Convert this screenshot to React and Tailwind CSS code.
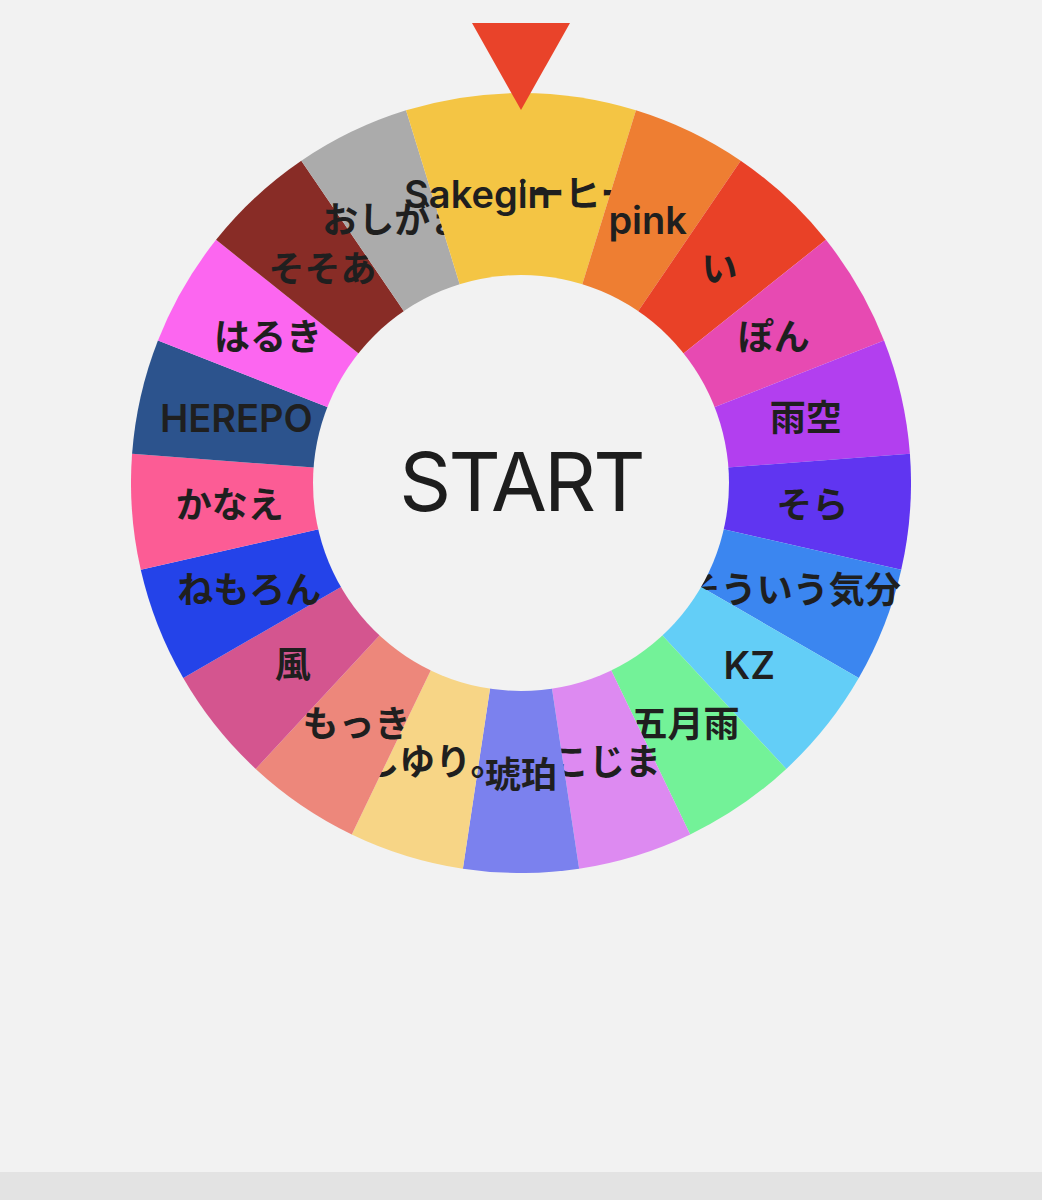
import React from 'react'

const items = [
  { name: 'コーヒー', color: '#F4C544' },
  { name: 'pink', color: '#EE7E32' },
  { name: 'い', color: '#E94127' },
  { name: 'ぽん', color: '#E74AB2' },
  { name: '雨空', color: '#B23FEF' },
  { name: 'そら', color: '#6035F1' },
  { name: 'そういう気分', color: '#3B86F0' },
  { name: 'KZ', color: '#63CEF7' },
  { name: '五月雨', color: '#73F298' },
  { name: 'こじま', color: '#DD8AF1' },
  { name: '琥珀', color: '#7B81EE' },
  { name: 'しゆり。', color: '#F7D586' },
  { name: 'もっき', color: '#ED877B' },
  { name: '風', color: '#D4558F' },
  { name: 'ねもろん', color: '#2443E9' },
  { name: 'かなえ', color: '#FC5C95' },
  { name: 'HEREPO', color: '#2C538D' },
  { name: 'はるき', color: '#FC66F0' },
  { name: 'そそあ', color: '#882C26' },
  { name: 'おしがま', color: '#ABABAB' },
  { name: 'Sakegin', color: '#F4C544' },
]

const SIZE = 780
const C = SIZE / 2
const R = 390
const LABEL_R = 292

// angle in degrees, clockwise from 12 o'clock
function point(deg, r) {
  const a = (deg * Math.PI) / 180
  return [C + r * Math.sin(a), C - r * Math.cos(a)]
}

const isLatin = (s) => /^[\x00-\x7f]+$/.test(s)

function Wheel() {
  const step = 360 / items.length

  return (
    <svg width={SIZE} height={SIZE} viewBox={`0 0 ${SIZE} ${SIZE}`} className="block">
      {items.map((item, i) => {
        const a0 = i * step
        const a1 = (i + 1) * step
        const [x0, y0] = point(a0, R)
        const [x1, y1] = point(a1, R)
        const [tx, ty] = point(a0 + step / 2, LABEL_R)
        return (
          <g key={i}>
            <path d={`M ${C} ${C} L ${x0} ${y0} A ${R} ${R} 0 0 1 ${x1} ${y1} Z`} fill={item.color} />
            <text
              x={tx}
              y={ty}
              textAnchor="middle"
              dominantBaseline="central"
              className={
                isLatin(item.name)
                  ? "font-['Inter','Noto_Sans_CJK_JP',sans-serif] text-[38px] font-semibold fill-[#1f1f1f]"
                  : "font-['Inter','Noto_Sans_CJK_JP',sans-serif] text-[36px] font-semibold fill-[#1f1f1f]"
              }
            >
              {item.name}
            </text>
          </g>
        )
      })}
    </svg>
  )
}

export default function App() {
  return (
    <div className="min-h-screen bg-[#f2f2f2] flex flex-col">
      <main className="h-[1172px] flex justify-center pt-[93px]">
        <div className="relative w-[780px] h-[780px]">
          <Wheel />

          <button className="absolute left-[182px] top-[182px] w-[416px] h-[416px] rounded-full bg-[#f2f2f2] flex items-center justify-center font-['Inter','Noto_Sans_CJK_JP',sans-serif] text-[81px] font-normal text-[#1d1d1d] tracking-[-0.035em]">
            START
          </button>

          <svg
            className="absolute left-[340px] -top-[70px] w-[100px] h-[88px]"
            viewBox="0 0 100 88"
          >
            <polygon points="1,0 99,0 50,87" fill="#E9432A" />
          </svg>
        </div>
      </main>
      <div className="h-7 bg-[#e3e3e3]" />
    </div>
  )
}
